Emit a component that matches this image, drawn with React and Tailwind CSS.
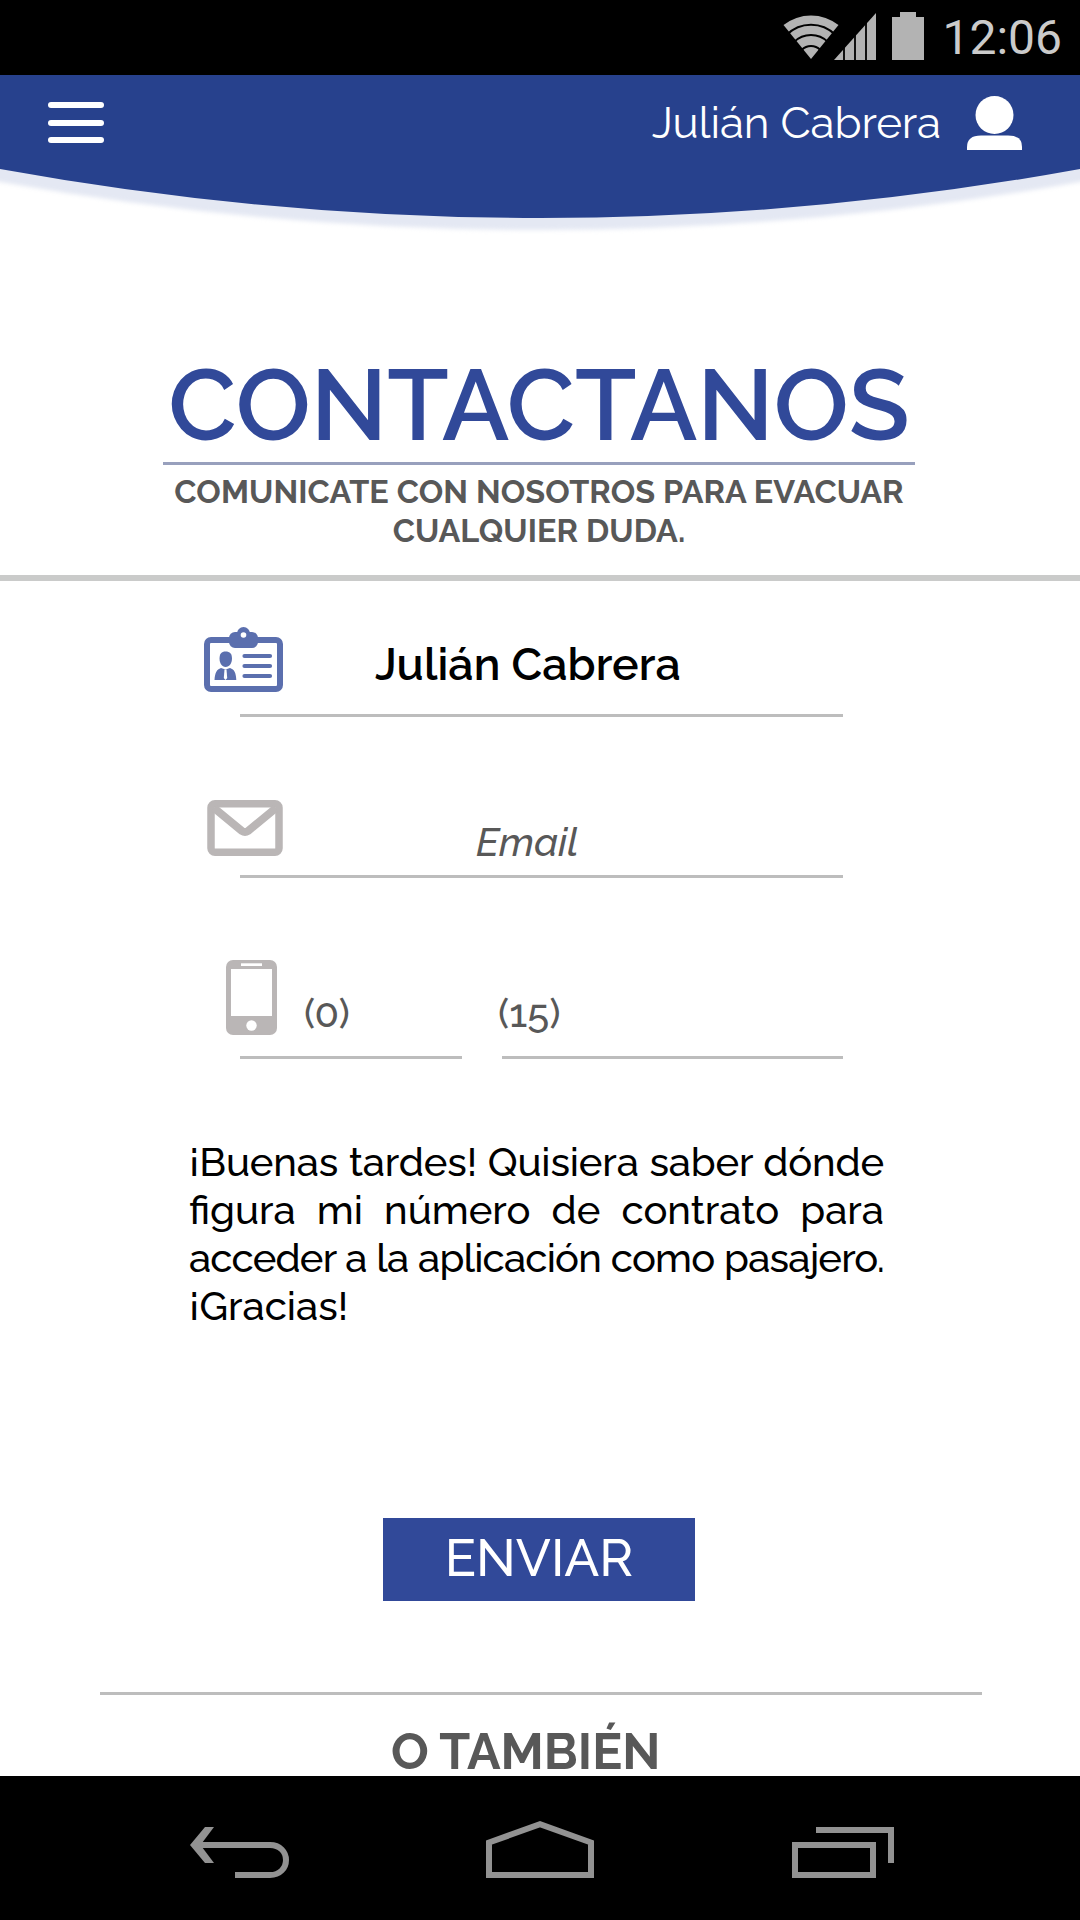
const message = [
    { text: '¡Buenas tardes! Quisiera saber dónde', style: 'tracking-[-0.15px]' },
    { text: 'figura mi número de contrato para', style: 'tracking-normal' },
    { text: 'acceder a la aplicación como pasajero.', style: 'tracking-[-0.81px]' },
]

const StatusBar = () => (
    <div className="flex h-[75px] items-center justify-end bg-black pr-[18px]">
        <svg width="142" height="75" viewBox="783 0 142 75" fill="#b3b3b3">
            <path d="M811 59 L783.5 25 A44.5 44.5 0 0 1 838.5 25 Z" />
            <g fill="none" stroke="#000" strokeWidth="2">
                <circle cx="811" cy="59" r="34.3" />
                <circle cx="811" cy="59" r="24" />
                <circle cx="811" cy="59" r="13" />
            </g>
            <path d="M834 60 L876 13 V60 Z" />
            <path d="M844 12 V61 M855 12 V61 M866 12 V61" stroke="#000" strokeWidth="1.8" />
            <path d="M892 17 H900 V12 H916 V17 H924 V60 H892 Z" />
        </svg>
        <span className="ml-[17px] mt-px font-['Roboto',sans-serif] text-[48px] leading-[48px] text-[#cbcbcb]">12:06</span>
    </div>
)

const Header = () => (
    <header className="relative h-[160px]">
        <svg className="absolute left-0 top-0" width="1080" height="180" viewBox="0 0 1080 180">
            <path className="blur-[2px]" d="M-20 0 H1100 V101 L1080 107 Q540 203 0 107 L-20 101 Z" fill="#e4e8f3" />
            <path d="M0 0 H1080 V94 Q540 192 0 94 Z" fill="#27418d" />
        </svg>
        <div className="relative flex h-[94px] items-center justify-between pl-[48px] pr-[58px]">
            <button className="mt-px flex flex-col gap-[11.5px]">
                <span className="h-[6px] w-[56px] rounded-full bg-white"></span>
                <span className="h-[6px] w-[56px] rounded-full bg-white"></span>
                <span className="h-[6px] w-[56px] rounded-full bg-white"></span>
            </button>
            <div className="flex items-center">
                <span className="mr-[26px] mt-[2px] text-[44px] leading-[44px] tracking-[-0.1px] text-white">Julián Cabrera</span>
                <svg className="mt-[2px]" width="55" height="54" viewBox="0 0 55 54" fill="#fff">
                    <circle cx="27.5" cy="19" r="19" />
                    <path d="M0 54 V51 Q0 39.500 14 39.500 H41 Q55 39.500 55 51 V54 Z" />
                </svg>
            </div>
        </div>
    </header>
)

const CardIcon = () => (
    <svg className="ml-px mt-[46px] shrink-0" width="80" height="66" viewBox="0 0 80 66" fill="#5b6fae">
        <rect x="3" y="13" width="73" height="49" rx="4" fill="none" stroke="#5b6fae" strokeWidth="6" />
        <rect x="25" y="5" width="29" height="16" rx="6" />
        <circle cx="39.500" cy="6.500" r="6.500" />
        <circle cx="39.500" cy="8" r="2.800" fill="#fff" />
        <path d="M21.500 24.500 C26 24.500 28 27 28 31.500 C28 36 25.500 40 21.500 40 C18 40 15.500 36 15.500 31.500 C15.500 27 17.500 24.500 21.500 24.500 Z" />
        <path d="M10.500 53 C11 46 12.500 42.500 17 41 L21.500 42.500 L26 41 C30.500 42.500 32 46 32.300 53 Z" />
        <path d="M20.500 42.500 H22.500 L23.200 51 L21.500 53 L19.800 51 Z" fill="#fff" />
        <path d="M40.500 29 H66 M40.500 39 H66 M40.500 49 H66" stroke="#5b6fae" strokeWidth="4.200" strokeLinecap="round" />
    </svg>
)

const MailIcon = () => (
    <svg className="ml-[4px] mt-[83px] shrink-0" width="76" height="56" viewBox="0 0 76 56" fill="none" stroke="#bab6b6">
        <rect x="4" y="3.750" width="68" height="48.500" rx="4" strokeWidth="7.500" />
        <path d="M7 8 L35 31 Q38 33 41 31 L69 8" strokeWidth="8" />
    </svg>
)

const PhoneIcon = () => (
    <svg className="ml-[23px] mt-[82px] shrink-0" width="51" height="75" viewBox="0 0 51 75" fill="#bab6b6">
        <rect width="51" height="75" rx="7" />
        <g fill="#fff">
            <rect x="5" y="9" width="41" height="47" />
            <rect x="15" y="3.300" width="21" height="2.700" />
            <circle cx="25.500" cy="65.500" r="5.200" />
        </g>
    </svg>
)

const NavBar = () => (
    <nav className="relative flex h-[144px] items-start bg-black pl-[190px] pt-[45px]">
        <svg width="99" height="57" viewBox="0 0 99 57">
            <path d="M0 24 L15 6 H24 L10.500 24 L24 42 H15 Z" fill="#929292" />
            <path d="M8 24 H80 C90 24 96 31 96 39 C96 47 90 54 80 54 H45" fill="none" stroke="#929292" strokeWidth="6" />
        </svg>
        <svg className="ml-[197px]" width="108" height="57" viewBox="0 0 108 57" fill="none" stroke="#929292" strokeWidth="6">
            <path d="M3 21.500 L54 3.200 L105 21.500 V54 H3 Z" />
        </svg>
        <svg className="ml-[198px]" width="102" height="57" viewBox="0 0 102 57" fill="none" stroke="#929292" strokeWidth="6">
            <path d="M3 24 H81 V54 H3 Z" />
            <path d="M24 9 H99 V42" />
        </svg>
    </nav>
)

export default () => {
    return (
        <div className="flex h-[1920px] w-[1080px] flex-col bg-white font-['Raleway','Lato',sans-serif]">
            <StatusBar />
            <Header />
            <main className="flow-root h-[1541px]">
                <div className="ml-[163px] mt-[121px] w-[752px] text-center">
                    <h1 className="border-b-[3px] border-[#98a0bd] pb-[8px] text-[99.8px] font-semibold leading-[98px] text-[#314999]">CONTACTANOS</h1>
                    <p className="mt-[8px] whitespace-nowrap text-[32.4px] font-bold leading-[39px] tracking-[0.08px] text-[#585858]">
                        COMUNICATE CON NOSOTROS PARA EVACUAR<br />CUALQUIER DUDA.
                    </p>
                </div>
                <div className="mt-[24px] h-[6px] bg-[#cacbca]"></div>

                <form className="ml-[203px] w-[640px]">
                    <div className="flex h-[133px] items-start">
                        <CardIcon />
                        <p className="ml-[91px] mt-[61px] whitespace-nowrap text-[44.7px] font-semibold leading-[44px] tracking-[0.1px] text-black">Julián Cabrera</p>
                    </div>
                    <div className="ml-[37px] h-[3px] bg-[#bdbdbd]"></div>

                    <div className="flex h-[158px] items-start">
                        <MailIcon />
                        <p className="ml-[193px] mt-[105px] text-[39.8px] font-medium italic leading-[40px] text-[#585858]">Email</p>
                    </div>
                    <div className="ml-[37px] h-[3px] bg-[#bdbdbd]"></div>

                    <div className="flex h-[178px] items-start text-[40px] font-medium leading-[40px] text-[#585858]">
                        <PhoneIcon />
                        <p className="ml-[27px] mt-[115px] w-[194px]">(0)</p>
                        <p className="mt-[115px]">(15)</p>
                    </div>
                    <div className="ml-[37px] flex gap-[40px]">
                        <div className="h-[3px] w-[222px] bg-[#bdbdbd]"></div>
                        <div className="h-[3px] w-[341px] bg-[#bdbdbd]"></div>
                    </div>
                </form>

                <div className="ml-[189px] mt-[79px] w-[695px] whitespace-nowrap text-[40px] font-medium leading-[48px] text-black">
                    { message.map(({ text, style }) => (
                        <p key={ text } className={ `text-justify [text-align-last:justify] ${ style }` }>{ text }</p>
                    )) }
                    <p>¡Gracias!</p>
                </div>

                <button className="ml-[383px] mt-[188px] flex h-[83px] w-[312px] items-center justify-center bg-[#314999] pb-[5px] text-[51.7px] font-medium leading-[51px] text-white">ENVIAR</button>

                <div className="ml-[100px] mt-[91px] h-[3px] w-[882px] bg-[#bdbdbd]"></div>
                <h2 className="ml-[391px] mt-[32px] text-[50px] font-bold leading-[49px] text-[#585858]">O TAMBIÉN</h2>
            </main>
            <NavBar />
        </div>
    )
}
